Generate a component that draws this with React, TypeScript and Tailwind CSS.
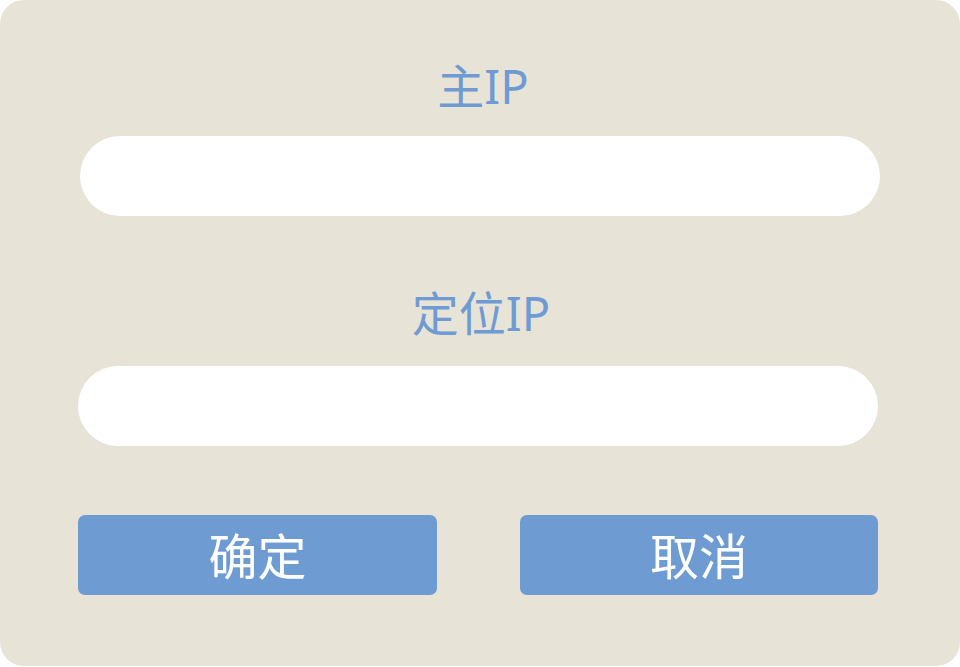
export default function App() {
  const font = { fontFamily: '"Noto Sans", "Noto Sans CJK SC", sans-serif' };
  return (
    <div className="w-[960px] h-[667px] bg-white">
      <div
        className="w-[960px] h-[666px] rounded-[24px] bg-[#e7e3d7] flex flex-col pt-[60px]"
        style={font}
      >
        <div className="h-[52px] leading-[52px] text-[47px] text-[#6f9bd2] text-center pl-[6px]">主IP</div>
        <div className="mt-[24px] ml-[80px] w-[800px] h-[80px] rounded-full bg-white" />
        <div className="mt-[71px] h-[52px] leading-[52px] text-[47px] text-[#6f9bd2] text-center pl-[2px]">定位IP</div>
        <div className="mt-[27px] ml-[78px] w-[800px] h-[80px] rounded-full bg-white" />
        <div className="mt-[69px] flex pl-[78px] gap-[83px]">
          <button className="w-[359px] h-[80px] rounded-[7px] bg-[#6f9bd3] text-white text-[49px] leading-none pt-[2px]">确定</button>
          <button className="w-[358px] h-[80px] rounded-[7px] bg-[#6f9bd3] text-white text-[49px] leading-none pt-[2px]">取消</button>
        </div>
      </div>
    </div>
  );
}
